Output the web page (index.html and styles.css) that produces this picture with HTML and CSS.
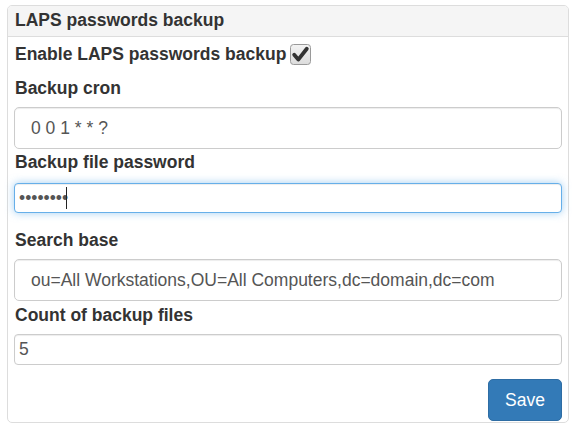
FILE: index.html
```html
<!DOCTYPE html>
<html>
<head>
<meta charset="utf-8">
<title>LAPS passwords backup</title>
<link rel="stylesheet" href="styles.css">
</head>
<body>
<div class="panel">
  <div class="panel-heading">LAPS passwords backup</div>
  <div class="panel-body">
    <div class="check-row">
      <span class="label-text">Enable LAPS passwords backup</span>
      <span class="checkbox">
        <svg width="21" height="21" viewBox="0 0 21 21">
          <defs>
            <linearGradient id="cbg" x1="0" y1="0" x2="0" y2="1">
              <stop offset="0" stop-color="#f4f4f4"/>
              <stop offset="1" stop-color="#dcdcdc"/>
            </linearGradient>
          </defs>
          <rect x="0.5" y="0.5" width="20" height="20" rx="3" fill="url(#cbg)" stroke="#9a9a9a"/>
          <polyline points="4.2,10.8 8.3,15.6 16.8,4.8" fill="none" stroke="#333" stroke-width="3.8" stroke-linecap="round" stroke-linejoin="round"/>
        </svg>
      </span>
    </div>

    <label class="label lbl-cron">Backup cron</label>
    <input class="field field-lg gap-input" type="text" value="0 0 1 * * ?">

    <label class="label">Backup file password</label>
    <div class="pw-wrap">
      <input class="field field-sm field-focus" type="password" value="12345678">
      <span class="caret"></span>
    </div>

    <label class="label lbl-search">Search base</label>
    <input class="field field-lg gap-input" type="text" value="ou=All Workstations,OU=All Computers,dc=domain,dc=com">

    <label class="label lbl-count">Count of backup files</label>
    <input class="field field-sm field-count gap-input" type="text" value="5">

    <div class="actions">
      <button class="btn-save" type="button">Save</button>
    </div>
  </div>
</div>
</body>
</html>
```

FILE: styles.css
```css
* {
  box-sizing: border-box;
}

body {
  margin: 0;
  background: #fff;
  font-family: "Liberation Sans", Arial, sans-serif;
  font-size: 17.5px;
  line-height: 25px;
  color: #333;
}

.panel {
  margin: 5px 0 0 7px;
  width: 562px;
  height: 418px;
  border: 1px solid #ddd;
  border-radius: 5px;
  background: #fff;
}

.panel-heading {
  height: 31px;
  padding: 2px 7px 0;
  background: #f5f5f5;
  border-bottom: 1px solid #ddd;
  border-radius: 4px 4px 0 0;
  font-weight: bold;
}

.panel-body {
  padding: 4px 6px 0 6px;
}

.check-row {
  display: flex;
  align-items: center;
  gap: 4px;
  height: 25px;
  padding-left: 1px;
  font-weight: bold;
}

.label-text {
  padding-top: 1px;
}

.checkbox {
  display: flex;
  width: 21px;
  height: 21px;
  margin-top: 1px;
}

.label {
  display: block;
  padding: 1px 0 0 1px;
  font-weight: bold;
  line-height: 25px;
}

.lbl-cron {
  margin-top: 9px;
}

.lbl-search {
  margin-top: 14px;
}

.lbl-count {
  margin-top: 1px;
}

.field {
  display: block;
  width: 100%;
  margin: 0;
  border: 1px solid #ccc;
  border-radius: 5px;
  background: #fff;
  color: #555;
  font-family: "Liberation Sans", Arial, sans-serif;
  font-size: 17.5px;
  box-shadow: inset 0 1px 1px rgba(0, 0, 0, 0.075);
  outline: none;
}

.gap-input {
  margin-top: 6px;
}

.field-lg {
  height: 42px;
  padding: 1px 16px 0;
}

.field-sm {
  height: 30px;
  padding: 0 4px;
  border-radius: 4px;
}

.field-count {
  height: 31px;
}

.field-focus {
  border-color: #66afe9;
  box-shadow: inset 0 1px 1px rgba(0, 0, 0, 0.075), 0 0 8px rgba(102, 175, 233, 0.6);
}

.pw-wrap {
  position: relative;
  margin-top: 8px;
}

.caret {
  position: absolute;
  left: 52px;
  top: 4px;
  width: 1px;
  height: 22px;
  background: #222;
}

.actions {
  display: flex;
  justify-content: flex-end;
  margin-top: 14px;
}

.btn-save {
  height: 42px;
  padding: 0 16px;
  border: 1px solid #2e6da4;
  border-radius: 5px;
  background: #337ab7;
  color: #fff;
  font-family: "Liberation Sans", Arial, sans-serif;
  font-size: 17.5px;
  cursor: pointer;
}
```
